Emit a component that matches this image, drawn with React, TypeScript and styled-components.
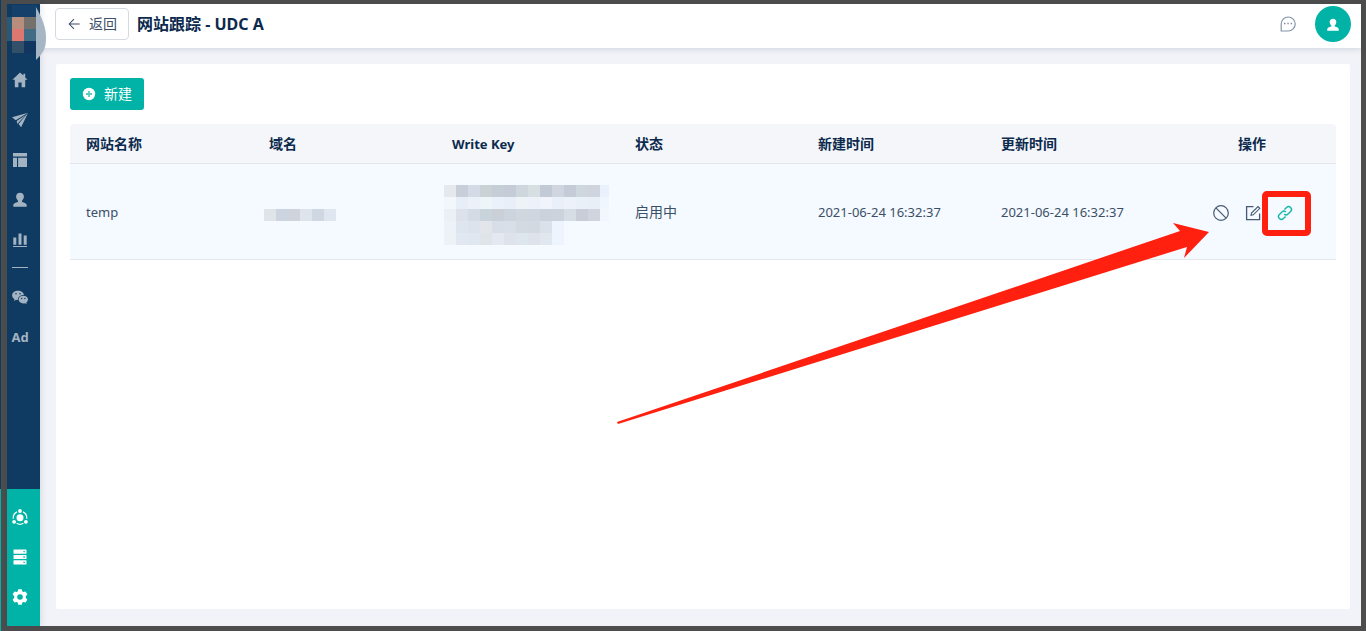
import React from 'react';
import styled, { createGlobalStyle } from 'styled-components';

const navy = '#0f3a61';
const teal = '#00b3a6';
const latin = '"Noto Sans", "Noto Sans CJK SC", sans-serif';

const GlobalStyle = createGlobalStyle`
  *, *::before, *::after { box-sizing: border-box; }
  body {
    margin: 0;
    font-family: ${latin};
    font-size: 14px;
    line-height: 20px;
    color: #3b4f66;
  }
  button { font: inherit; color: inherit; cursor: pointer; }
`;

const Edge = styled.div`
  min-height: 100vh;
  padding-left: 1px;
  display: flex;
  background: linear-gradient(to top, ${teal} 142px, ${navy} 142px);
`;

const Frame = styled.div`
  flex: 1;
  display: flex;
  min-width: 0;
  border: solid #4d4d4d;
  border-width: 4px 5px 5px 6px;
  background: #f2f3f8;
`;

const Sidebar = styled.nav`
  position: relative;
  flex: 0 0 33px;
  display: flex;
  flex-direction: column;
  justify-content: space-between;
  background: ${navy};
  box-shadow: 1px 0 6px rgba(30, 50, 80, 0.14);
  z-index: 2;
`;

const LogoLink = styled.a`
  display: block;
  align-self: flex-start;
`;

const Logo = styled.svg`
  display: block;
  overflow: visible;
`;

const NavGroup = styled.div`
  display: flex;
  flex-direction: column;
  align-items: center;
  padding-right: 7px;
`;

const BottomGroup = styled(NavGroup)`
  padding-top: 8px;
  padding-bottom: 9px;
  background: ${teal};
`;

const NavLink = styled.a<{ $bright?: boolean }>`
  display: flex;
  align-items: center;
  justify-content: center;
  width: 26px;
  height: 40px;
  color: ${(p) => (p.$bright ? '#fff' : '#a3b3c2')};
  font-size: 13px;
  font-weight: 700;
  text-decoration: none;
`;

const NavDivider = styled.hr`
  width: 16px;
  height: 1px;
  margin: 7px 0 9px;
  border: 0;
  background: #a3b3c2;
`;

const Main = styled.div`
  flex: 1;
  min-width: 0;
  display: flex;
  flex-direction: column;
`;

const Header = styled.header`
  display: flex;
  align-items: center;
  height: 44px;
  padding: 0 10px 4px 15px;
  background: #fff;
  box-shadow: 0 1px 6px rgba(30, 50, 80, 0.16);
`;

const BackButton = styled.button`
  display: flex;
  align-items: center;
  justify-content: space-between;
  width: 74px;
  height: 32px;
  padding: 0 11px;
  border: 1px solid #d5dae0;
  border-radius: 4px;
  background: #fff;
`;

const Title = styled.h1`
  flex: 1;
  margin: 0 0 0 8px;
  font-size: 16px;
  line-height: 24px;
  font-weight: 700;
  color: #0b2a4d;
`;

const IconButton = styled.button<{ $accent?: boolean }>`
  display: flex;
  width: 16px;
  height: 16px;
  padding: 0;
  border: 0;
  background: none;
  color: ${(p) => (p.$accent ? '#14b8aa' : '#465a70')};
`;

const Avatar = styled.button`
  display: flex;
  align-items: center;
  justify-content: center;
  width: 36px;
  height: 36px;
  margin-left: 19px;
  padding: 0;
  border: 0;
  border-radius: 50%;
  background: ${teal};
`;

const Panel = styled.main`
  flex: 1;
  margin: 16px 11px 17px 16px;
  padding: 14px;
  border-radius: 2px;
  background: #fff;
`;

const CreateButton = styled.button`
  display: flex;
  align-items: center;
  justify-content: space-between;
  width: 74px;
  height: 32px;
  padding: 0 12px;
  border: 0;
  border-radius: 3px;
  background: ${teal};
  color: #fff;
`;

const Table = styled.table`
  width: 100%;
  margin-top: 14px;
  border-collapse: separate;
  border-spacing: 0;
  table-layout: fixed;
`;

const HeadCell = styled.th<{ $center?: boolean }>`
  height: 40px;
  padding: 0 16px;
  border-bottom: 1px solid #e3e7ec;
  background: #f5f6fa;
  color: #0b2a4d;
  font-weight: 700;
  text-align: ${(p) => (p.$center ? 'center' : 'left')};
  &:first-child { border-top-left-radius: 4px; }
  &:last-child { border-top-right-radius: 4px; }
`;

const Cell = styled.td<{ $mask?: boolean; $actions?: boolean }>`
  height: 96px;
  padding: ${(p) => (p.$mask ? '0 8px' : '0 16px')};
  ${(p) => p.$actions && 'padding: 0 15px 0 17px; text-align: center;'}
  border-bottom: 1px solid #e3e7ec;
  background: #f4faff;
`;

const Latin = styled.span`
  font-size: 13px;
`;

const Mosaic = styled.svg<{ $inset?: boolean }>`
  display: block;
  margin-left: ${(p) => (p.$inset ? '3px' : '0')};
  margin-top: 6px;
`;

const Actions = styled.div`
  position: relative;
  display: inline-flex;
  gap: 16px;
  vertical-align: middle;
`;

const Highlight = styled.div`
  position: absolute;
  left: 49px;
  top: -14px;
  width: 49px;
  height: 45px;
  border: 6px solid #ff2010;
  border-radius: 5px;
  pointer-events: none;
`;

const Pointer = styled.svg`
  position: absolute;
  right: 83px;
  top: 17px;
  pointer-events: none;
`;

type IconProps = { children: React.ReactNode; size?: number; line?: boolean };
const Icon = ({ children, size = 16, line }: IconProps) => (
  <svg
    width={size}
    height={size}
    viewBox="0 0 16 16"
    fill={line ? 'none' : 'currentColor'}
    stroke={line ? 'currentColor' : 'none'}
    strokeWidth="1.2"
    aria-hidden="true"
  >
    {children}
  </svg>
);

const person = (
  <path d="M8 .8c2.3 0 3.9 1.5 3.9 3.8 0 1.7-.8 3.200-1.900 4.100v1.200c2.600.6 4.700 1.500 4.700 3.200v1.700H1.300v-1.700c0-1.700 2.100-2.600 4.700-3.200V8.700C4.900 7.800 4.100 6.300 4.100 4.600 4.100 2.300 5.700.8 8 .8Z" />
);

const navItems = [
  { label: '首页', art: <path d="M8 .4.4 7.800h2.400v7.400h3.600V10.400h3.200v4.800h3.600V7.800h2.400l-2.400-2.400V1.800h-1.800v1.800Z" /> },
  {
    label: '营销',
    art: (
      <>
        <path d="M16 .8 0 5.200l3.700 3.100Z" />
        <path d="M14.400 2.400 4.700 9.100l.7 3 1.900-2.300Z" />
        <path d="M16 1 8 10.300 6.500 12l2.600 3.200Z" />
      </>
    ),
  },
  { label: '页面', art: <path d="M1 1h14v3.500H1ZM1 5.800h4v9.200H1ZM6.100 5.800H15v9.200H6.100Z" /> },
  { label: '用户', art: person },
  { label: '分析', art: <path d="M1.300 5.500h3v7.300h-3ZM6.500 1.500h3v11.300h-3ZM11.700 3.500h3v9.300h-3ZM1 14h14v1H1Z" /> },
];

const WechatArt = (
  <>
    <path fillRule="evenodd" d="M6 1.700c3.200 0 5.700 1.800 5.900 4.300-3.500-.1-6.200 2.200-6 5.100-.7 0-1.300-.1-1.900-.3l-2 1.200.5-1.900C1.100 9.300.1 7.900.1 6.400.1 3.800 2.700 1.700 6 1.700ZM4 3.900a.8.8 0 1 0 0 1.600.8.8 0 0 0 0-1.600Zm4 0a.8.8 0 1 0 0 1.600.8.8 0 0 0 0-1.600Z" />
    <path fillRule="evenodd" d="M11.300 6.700c2.600 0 4.700 1.700 4.700 3.900 0 1.200-.7 2.200-1.700 3l.4 1.500-1.700-.9c-.5.2-1.100.3-1.700.3-2.600 0-4.700-1.700-4.700-3.900s2.100-3.900 4.700-3.900ZM9.700 8.800a.7.700 0 1 0 0 1.400.7.700 0 0 0 0-1.400Zm3.200 0a.7.700 0 1 0 0 1.400.7.700 0 0 0 0-1.400Z" />
  </>
);

const ShareArt = (
  <>
    <circle cx="8" cy="8.700" r="3.500" />
    <circle cx="8" cy="2" r="1.900" />
    <circle cx="2.100" cy="12.800" r="1.900" />
    <circle cx="13.900" cy="12.800" r="1.900" />
    <path d="M5 2.900A6.700 6.700 0 0 0 1.300 9.600M11 2.900a6.700 6.700 0 0 1 3.700 6.700M4.600 14.300a6.700 6.700 0 0 0 6.800 0" fill="none" stroke="currentColor" strokeWidth="1.200" />
  </>
);

const ServerArt = (
  <path fillRule="evenodd" d="M2 .5h12q.5 0 .5.500v3.200q0 .5-.5.500H2q-.5 0-.5-.5V1q0-.5.5-.5Zm9.400 1.400v1.400h1.400V1.900ZM2 5.900h12q.5 0 .5.500v3.200q0 .5-.5.500H2q-.5 0-.5-.5V6.400q0-.5.5-.5Zm9.400 1.400v1.400h1.400V7.300ZM2 11.300h12q.5 0 .5.500V15q0 .5-.5.500H2q-.5 0-.5-.5v-3.200q0-.5.5-.5Zm9.400 1.400v1.400h1.400v-1.400Z" />
);

const GearArt = (
  <path fillRule="evenodd" d="M6.200.3h3.600l.5 2.200 1.100.6 2.200-.7 1.800 3.100L13.800 7v1.900l1.600 1.600-1.800 3.100-2.200-.7-1.100.7-.5 2.100H6.200l-.5-2.100-1.100-.7-2.200.7-1.800-3.100 1.600-1.600V7L.6 5.500l1.800-3.100 2.200.7 1.100-.6ZM8 5.200A2.800 2.800 0 1 0 8 10.800 2.800 2.800 0 0 0 8 5.200Z" />
);

type Pixel = [number, number, string];
const Pixels = ({ rows }: { rows: Pixel[] }) => (
  <>
    {rows.map(([col, row, fill]) => (
      <rect key={`${col}-${row}`} x={col * 12} y={row * 12} width="12" height="12" fill={fill} />
    ))}
  </>
);

const toPixels = (rows: string[]): Pixel[] =>
  rows.flatMap((row, y) => row.split(' ').map((c, x): Pixel => [x, y, `#${c}`]));

const domainPixels = toPixels(['dfe4e8 ccd4df cfd3dc dde4ec cfd7e3 dfe6ef']);
const keyPixels = toPixels([
  'e5e9ed c8cfd9 d5dbe6 cbd2d6 c5cdd6 c5ccd7 ced6de d7dfe3 c2cad6 d0d5df c5ccd7 ced6de cfd4de eaf1fc',
  'f2f7fb e8eef7 ecf1f9 eef5f9 eaf1fa e9eff9 edf3f7 edf2fa f1f5fb eaf0fa edf2fa eaf0f8 e8eff7 f0f6fd',
  'eaf0f6 dce1ea d5dbe4 c9d3dc cacfd8 cdd4de d1d7de d0d6df cbd2db cdd3dc d7dde5 c8cdd7 cfd4dd f2f7fd',
  'ecf2f7 dfe5ee dde3ed e2e6ea d8dee7 d9dfe9 d3dae2 d2d9e1 dbe1ea eef4fd',
  'ecf2f6 e2e8f1 e1e7f0 dfe4e8 e3e8f1 dde2eb dee6ed dde2eb e1e7ef eef4fd',
]);

const columns = ['网站名称', '域名', 'Write Key', '状态', '新建时间', '更新时间'];

export default function App() {
  return (
    <Edge>
      <GlobalStyle />
      <Frame>
        <Sidebar aria-label="主导航">
          <NavGroup>
            <LogoLink href="#" aria-label="主页">
              <Logo width="26" height="56" viewBox="0 0 26 56">
                <rect x="5" y="1" width="24" height="12" fill="#144069" />
                <rect x="0" y="13" width="5" height="24" fill="#285a78" />
                <rect x="5" y="13" width="12" height="12" fill="#b98d7b" />
                <rect x="17" y="13" width="12" height="12" fill="#74716c" />
                <rect x="5" y="25" width="12" height="12" fill="#dd7770" />
                <rect x="17" y="25" width="12" height="12" fill="#426b86" />
                <rect x="5" y="37" width="12" height="12" fill="#344f68" />
                <rect x="17" y="37" width="12" height="12" fill="#113761" />
                <path d="M29 3C35 14 39 23 39 34S36 49 29 56Z" fill="#a7b6c4" />
              </Logo>
            </LogoLink>
            {navItems.map((item) => (
              <NavLink key={item.label} href="#" aria-label={item.label}>
                <Icon>{item.art}</Icon>
              </NavLink>
            ))}
            <NavDivider />
            <NavLink href="#" aria-label="微信">
              <Icon>{WechatArt}</Icon>
            </NavLink>
            <NavLink href="#">Ad</NavLink>
          </NavGroup>
          <BottomGroup>
            <NavLink href="#" aria-label="共享" $bright>
              <Icon>{ShareArt}</Icon>
            </NavLink>
            <NavLink href="#" aria-label="数据" $bright>
              <Icon>{ServerArt}</Icon>
            </NavLink>
            <NavLink href="#" aria-label="设置" $bright>
              <Icon>{GearArt}</Icon>
            </NavLink>
          </BottomGroup>
        </Sidebar>
        <Main>
          <Header>
            <BackButton type="button">
              <Icon line size={14}>
                <path d="M14.500 8H3M8 2.500 2.500 8 8 13.500" />
              </Icon>
              返回
            </BackButton>
            <Title>网站跟踪 - UDC A</Title>
            <IconButton type="button" aria-label="消息">
              <svg width="16" height="16" viewBox="0 0 16 16" fill="none" stroke="#8593a8" aria-hidden="true">
                <path d="M1.200 15V8A7 7 0 1 1 8.200 15Z" strokeWidth="1.200" />
                <path d="M4 7.500h1.500M7.300 7.500h1.500M10.600 7.500h1.500" strokeWidth="1.500" />
              </svg>
            </IconButton>
            <Avatar type="button" aria-label="账户">
              <svg width="12" height="13" viewBox="1 0 14 15" fill="#fff" aria-hidden="true">
                {person}
              </svg>
            </Avatar>
          </Header>
          <Panel>
            <CreateButton type="button">
              <svg width="14" height="14" viewBox="0 0 14 14" aria-hidden="true">
                <circle cx="7" cy="7" r="6.200" fill="#fff" />
                <path d="M7 4v6M4 7h6" stroke="#5cccc3" strokeWidth="1.800" />
              </svg>
              新建
            </CreateButton>
            <Table>
              <colgroup>
                {columns.map((c) => (
                  <col key={c} />
                ))}
                <col width="168" />
              </colgroup>
              <thead>
                <tr>
                  {columns.map((c) => (
                    <HeadCell key={c} scope="col">
                      {c === 'Write Key' ? <Latin>{c}</Latin> : c}
                    </HeadCell>
                  ))}
                  <HeadCell scope="col" $center>操作</HeadCell>
                </tr>
              </thead>
              <tbody>
                <tr>
                  <Cell><Latin>temp</Latin></Cell>
                  <Cell $mask>
                    <Mosaic $inset width="72" height="12"><Pixels rows={domainPixels} /></Mosaic>
                  </Cell>
                  <Cell $mask>
                    <Mosaic width="165" height="60"><Pixels rows={keyPixels} /></Mosaic>
                  </Cell>
                  <Cell>启用中</Cell>
                  <Cell><Latin>2021-06-24 16:32:37</Latin></Cell>
                  <Cell><Latin>2021-06-24 16:32:37</Latin></Cell>
                  <Cell $actions>
                    <Actions>
                      <IconButton type="button" aria-label="停用">
                        <Icon line>
                          <circle cx="8" cy="8" r="7.300" />
                          <path d="m2.900 2.900 10.200 10.200" />
                        </Icon>
                      </IconButton>
                      <IconButton type="button" aria-label="编辑">
                        <Icon line>
                          <path d="M8.500 1.600H1.600v13h13V8.500" strokeWidth="1.300" />
                          <path d="M6 10.300 6.500 8 13 1.500 14.800 3.300 8.300 9.800Z" strokeWidth="1.100" />
                        </Icon>
                      </IconButton>
                      <IconButton type="button" aria-label="链接" $accent>
                        <Icon line>
                          <g strokeWidth="1.400">
                            <path d="m7.400 4.600 2.200-2.200a2.700 2.700 0 0 1 4 4L11 9a2.700 2.700 0 0 1-3.800 0" />
                            <path d="m8.600 11.400-2.200 2.200a2.700 2.700 0 0 1-4-4L5 7a2.700 2.700 0 0 1 3.800 0" />
                          </g>
                        </Icon>
                      </IconButton>
                      <Highlight />
                      <Pointer width="593" height="202" viewBox="0 0 593 202" aria-hidden="true">
                        <path d="M0 200 563 9 556 1 592 10 567 36 570 25 1 202Z" fill="#ff2010" />
                      </Pointer>
                    </Actions>
                  </Cell>
                </tr>
              </tbody>
            </Table>
          </Panel>
        </Main>
      </Frame>
    </Edge>
  );
}
